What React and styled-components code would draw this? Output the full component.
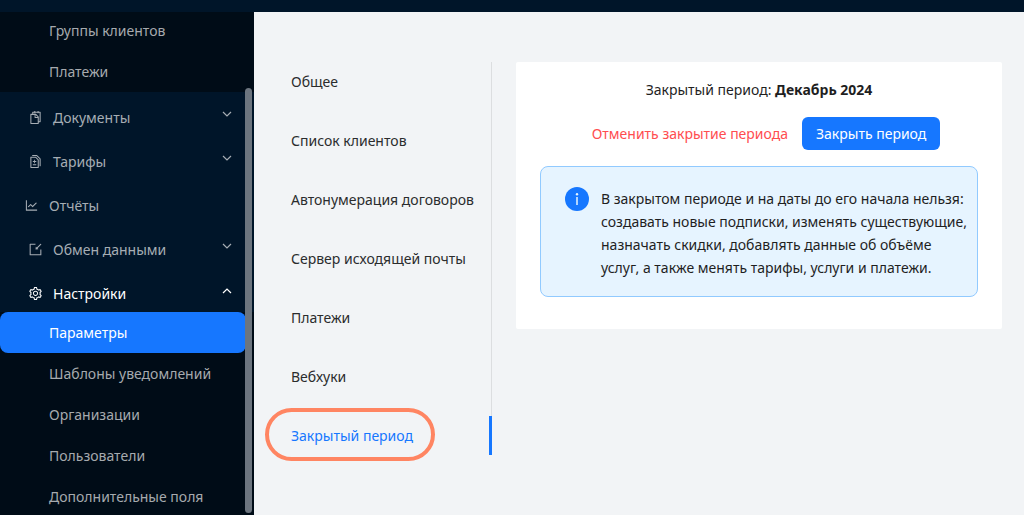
import React, { useState } from 'react';
import styled, { createGlobalStyle } from 'styled-components';
import {
	AiOutlineSnippets,
	AiOutlineDiff,
	AiOutlineLineChart,
	AiOutlineImport,
	AiOutlineSetting,
} from 'react-icons/ai';

const clientItems = ['Группы клиентов', 'Платежи'];

const sections = [
	{ title: 'Документы', icon: AiOutlineSnippets, nested: true },
	{ title: 'Тарифы', icon: AiOutlineDiff, nested: true },
	{ title: 'Отчёты', icon: AiOutlineLineChart, nested: false },
	{ title: 'Обмен данными', icon: AiOutlineImport, nested: true },
	{ title: 'Настройки', icon: AiOutlineSetting, nested: true, open: true },
];

const settingItems = [
	'Параметры',
	'Шаблоны уведомлений',
	'Организации',
	'Пользователи',
	'Дополнительные поля',
];

const tabs = [
	'Общее',
	'Список клиентов',
	'Автонумерация договоров',
	'Сервер исходящей почты',
	'Платежи',
	'Вебхуки',
	'Закрытый период',
];

const App = () => {
	const [activeItem, setActiveItem] = useState('Параметры');
	const [activeTab, setActiveTab] = useState('Закрытый период');

	return (
		<Page>
			<GlobalStyle />
			<TopBar />
			<Layout>
				<Sidebar>
					<Menu>
						<SubMenu>
							{clientItems.map((item) => (
								<SubItem key={item} href="#">{item}</SubItem>
							))}
						</SubMenu>
						<Sections>
							{sections.map(({ title, icon: Icon, nested, open }) => (
								<SectionButton key={title} $nested={nested} $open={open} aria-expanded={nested ? !!open : undefined}>
									<Icon size={15} />
									<SectionTitle>{title}</SectionTitle>
									{nested && (
										<Chevron viewBox="0 0 10 10" aria-hidden="true">
											<path d={open ? 'M1 7l4-4 4 4' : 'M1 2l4 4 4-4'} />
										</Chevron>
									)}
								</SectionButton>
							))}
						</Sections>
						<SubMenu>
							{settingItems.map((item) => (
								<SubItem key={item} href="#" $active={item === activeItem} onClick={() => setActiveItem(item)}>
									{item}
								</SubItem>
							))}
						</SubMenu>
					</Menu>
					<ScrollThumb />
				</Sidebar>
				<Main>
					<Tabs role="tablist" aria-orientation="vertical">
						{tabs.map((tab) => (
							<Tab
								key={tab}
								role="tab"
								aria-selected={tab === activeTab}
								$active={tab === activeTab}
								onClick={() => setActiveTab(tab)}
							>
								{tab}
								{tab === 'Закрытый период' && <Marker />}
							</Tab>
						))}
					</Tabs>
					<Card>
						<Period>Закрытый период: <strong>Декабрь 2024</strong></Period>
						<Actions>
							<Button>Отменить закрытие периода</Button>
							<Button $primary>Закрыть период</Button>
						</Actions>
						<Alert>
							<InfoIcon viewBox="0 0 24 24" aria-hidden="true">
								<circle cx="12" cy="12" r="12" fill="#1677ff" />
								<circle cx="12" cy="7.2" r="1.2" fill="#e6f4ff" />
								<path d="M12 10v8" stroke="#e6f4ff" strokeWidth="1.5" />
							</InfoIcon>
							<AlertText>
								В закрытом периоде и на даты до его начала нельзя:
								создавать новые подписки, изменять существующие,
								назначать скидки, добавлять данные об объёме
								услуг, а также менять тарифы, услуги и платежи.
							</AlertText>
						</Alert>
					</Card>
				</Main>
			</Layout>
		</Page>
	);
};

export default App;


const GlobalStyle = createGlobalStyle`
  * {
    box-sizing: border-box;
  }
  body {
    margin: 0;
    font-family: 'Noto Sans', 'Open Sans', sans-serif;
    font-size: 14px;
    color: #1f1f1f;
    background: #f2f4f6;
  }
  button {
    font: inherit;
    border: none;
    background: transparent;
    cursor: pointer;
  }
`
const Page = styled.div`
  display: flex;
  flex-direction: column;
  height: 100vh;
  overflow: hidden;
`
const TopBar = styled.header`
  flex: none;
  height: 12px;
  background: #001529;
`
const Layout = styled.div`
  display: flex;
  flex: 1;
  min-height: 0;
`
const Sidebar = styled.aside`
  position: relative;
  flex: none;
  width: 254px;
  overflow: hidden;
  background: #001529;
`
const Menu = styled.nav`
  margin-top: -2px;
`
const SubMenu = styled.div`
  display: flex;
  flex-direction: column;
  padding-right: 8px;
  background: #000c17;
`
const SubItem = styled.a`
  display: flex;
  align-items: center;
  height: 41px;
  padding-left: 49px;
  border-radius: 8px;
  color: ${({ $active }) => $active ? '#fff' : '#a6aaae'};
  background: ${({ $active }) => $active ? '#1677ff' : 'transparent'};
  text-decoration: none;
`
const Sections = styled.div`
  display: flex;
  flex-direction: column;
  gap: 12px;
  padding: 9px 0 3px;
`
const SectionButton = styled.button`
  display: flex;
  align-items: center;
  gap: 10px;
  height: 32px;
  padding: 0 22px 0 ${({ $nested }) => $nested ? '28px' : '24px'};
  color: ${({ $open }) => $open ? '#fff' : '#a6adb4'} !important;
  text-align: left;
`
const SectionTitle = styled.span`
  flex: 1;
`
const Chevron = styled.svg`
  width: 10px;
  height: 14px;
  padding-bottom: 4px;
  fill: none;
  stroke: currentColor;
  stroke-width: 1.2;
`
const ScrollThumb = styled.div`
  position: absolute;
  top: 76px;
  right: 2px;
  bottom: 2px;
  width: 7px;
  border-radius: 4px;
  background: #6c757f;
`
const Main = styled.main`
  display: flex;
  flex: 1;
  align-items: flex-start;
  gap: 24px;
  min-width: 0;
  padding: 50px 22px 0 13px;
`
const Tabs = styled.div`
  display: flex;
  flex: none;
  flex-direction: column;
  gap: 20px;
  width: 225px;
  box-shadow: inset -1px 0 #dcdee0;
`
const Tab = styled.button`
  position: relative;
  height: 39px;
  padding: 0 21px 0 24px;
  border-right: 3px solid ${({ $active }) => $active ? '#1677ff' : 'transparent'} !important;
  color: ${({ $active }) => $active ? '#1677ff' : '#2b2c2d'};
  text-align: left;
  white-space: nowrap;
`
const Marker = styled.span`
  position: absolute;
  top: -8px;
  left: -2px;
  width: 170px;
  height: 53px;
  border: 4px solid #ff8562;
  border-radius: 27px;
  pointer-events: none;
`
const Card = styled.section`
  flex: 1;
  min-width: 0;
  padding: 16px 24px 32px;
  border-radius: 2px;
  background: #fff;
`
const Period = styled.p`
  margin: 0 0 16px;
  line-height: 23px;
  text-align: center;
`
const Actions = styled.div`
  display: flex;
  flex-wrap: wrap;
  justify-content: center;
  margin-bottom: 16px;
`
const Button = styled.button`
  height: 33px;
  padding: 0 14px !important;
  border-radius: 6px;
  color: ${({ $primary }) => $primary ? '#fff' : '#ff4d4f'} !important;
  background: ${({ $primary }) => $primary ? '#1677ff' : 'transparent'} !important;
`
const Alert = styled.div`
  display: flex;
  align-items: flex-start;
  gap: 12px;
  padding: 20px 8px 17px 24px;
  border: 1px solid #91caff;
  border-radius: 8px;
  background: #e6f4ff;
`
const InfoIcon = styled.svg`
  flex: none;
  width: 24px;
  height: 24px;
`
const AlertText = styled.div`
  line-height: 23px;
`
